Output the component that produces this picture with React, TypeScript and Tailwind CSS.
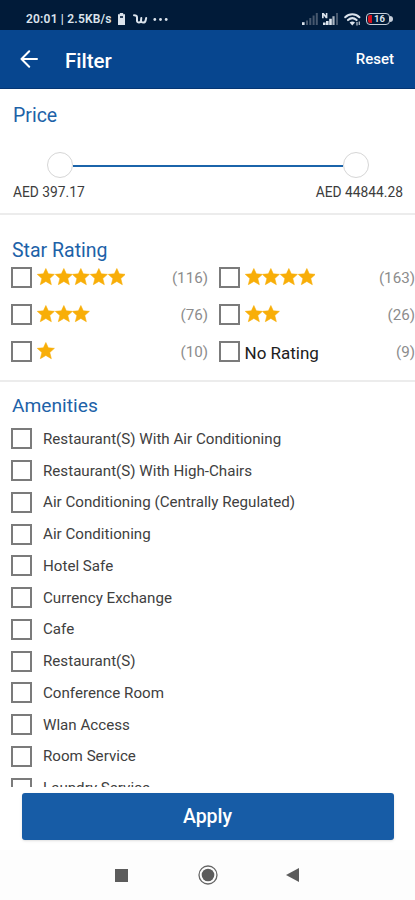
import React from 'react';

interface StarOption {
  stars: number;
  count: number;
}

interface CheckboxProps {
  label: string;
}

const starOptions: StarOption[] = [
  { stars: 5, count: 116 },
  { stars: 4, count: 163 },
  { stars: 3, count: 76 },
  { stars: 2, count: 26 },
  { stars: 1, count: 10 },
  { stars: 0, count: 9 },
];

const amenities = [
  'Restaurant(S) With Air Conditioning',
  'Restaurant(S) With High-Chairs',
  'Air Conditioning (Centrally Regulated)',
  'Air Conditioning',
  'Hotel Safe',
  'Currency Exchange',
  'Cafe',
  'Restaurant(S)',
  'Conference Room',
  'Wlan Access',
  'Room Service',
  'Laundry Service',
];

const Checkbox: React.FC<CheckboxProps> = ({ label }) => (
  <input
    type="checkbox"
    aria-label={label}
    className="block h-[21px] w-[21px] shrink-0 appearance-none border-2 border-[#7b7b7b] bg-white checked:bg-[#175ca6]"
  />
);

const Star: React.FC = () => (
  <svg className="h-[18px] w-[17.7px] shrink-0" viewBox="0 0 18 18" aria-hidden="true">
    <path
      fill="#f8ae08"
      stroke="#f8ae08"
      strokeWidth="0.6"
      strokeLinejoin="round"
      d="M9 .4l2.5 5.4 6.2.5-4.7 4.2 1.6 6.3L9 13.5l-5.6 3.3L5 10.5.3 6.3l6.2-.5z"
    />
  </svg>
);

const StatusBar: React.FC = () => (
  <div className="flex h-[30px] items-center bg-[#011b39] pl-[26px] pr-[22px] pt-2 text-[#dbe3ec]">
    <span className="w-[88px] whitespace-nowrap text-[12px] leading-4 font-semibold tracking-[0.2px]">
      20:01 | 2.5KB/s
    </span>
    <svg className="ml-[3px] h-[12px] w-[9px]" viewBox="0 0 9 12" aria-hidden="true">
      <path fill="currentColor" d="M2.8 0h3.4v1.3H8V12H1V1.3h1.8z" />
      <path fill="#011b39" d="M3 3.2h3v1.6H3z" />
    </svg>
    <svg className="ml-[7px] h-[10px] w-[15px]" viewBox="0 0 15 10" fill="none" aria-hidden="true">
      <path
        stroke="currentColor"
        strokeWidth="2"
        strokeLinecap="round"
        strokeLinejoin="round"
        d="M1 1.2c2 0 3 .6 3 2.3v3.2C4 9.2 7.8 9.2 8 6.5L8.3 4M8 6.5c.2 2.8 4 2.8 4.6 0L13.2 4"
      />
    </svg>
    <svg className="ml-[5px] h-[3px] w-[15px]" viewBox="0 0 15 3" fill="currentColor" aria-hidden="true">
      <circle cx="1.8" cy="1.5" r="1.4" />
      <circle cx="7.5" cy="1.5" r="1.4" />
      <circle cx="13.2" cy="1.5" r="1.4" />
    </svg>

    <div className="ml-auto flex items-center">
      <svg className="h-[12px] w-[16px]" viewBox="0 0 16 12" aria-hidden="true">
        <path fill="#dbe3ec" d="M0 9.2h2.6V12H0z" />
        <path fill="#47586e" d="M4 7.5h2V12H4zM7.3 5h2v7h-2zM10.6 2.5h2V12h-2zM13.8 0h2v12h-2z" />
      </svg>
      <svg className="ml-[4px] h-[12px] w-[17px]" viewBox="0 0 17 12" aria-hidden="true">
        <path fill="#dbe3ec" d="M0 0h1.8l2 2.6V0h1.6v5.2H3.8l-2.1-2.6v2.6H0zM1 9.5h2.6V12H1zM4 8h2.6v4H4zM7.2 5.8h2.6V12H7.2z" />
        <path fill="#aab5c2" d="M10.4 3.2h2.2V12h-2.2z" />
        <path fill="#47586e" d="M14 0h2v12h-2z" />
      </svg>
      <svg className="ml-[5px] h-[13px] w-[17px]" viewBox="0 0 17 13" fill="none" aria-hidden="true">
        <path
          stroke="currentColor"
          strokeWidth="2"
          strokeLinecap="round"
          d="M1.2 4.2c4-3.9 10.2-3.9 14.2 0M4 7.1c2.6-2.4 6-2.4 8.6 0"
        />
        <path fill="currentColor" d="M5.6 9.5c1.7-1.4 3.7-1.4 5.4 0l-2.7 3z" />
        <path stroke="#aab5c2" strokeWidth="1.4" d="M13 9v3.5M15.3 8.5V12" />
      </svg>
      <div className="ml-[5px] flex items-center">
        <div className="flex h-[12px] w-[24px] items-center rounded-[4px] border-[1.5px] border-[#c6cfda] p-px">
          <div className="h-full w-[4px] rounded-l-[2px] bg-[#d3101c]" />
          <span className="ml-[2px] text-[9.5px] leading-none font-bold">16</span>
        </div>
        <div className="h-[6px] w-[3px] rounded-r-[3px] bg-[#c6cfda]" />
      </div>
    </div>
  </div>
);

const Header: React.FC = () => (
  <header className="flex h-[59px] items-center border-b border-[#053673] bg-[#07468f] pl-[20px] pr-[21px] text-white">
    <button type="button" aria-label="Back">
      <svg className="h-[18px] w-[18px]" viewBox="0 0 18 18" fill="none" aria-hidden="true">
        <path
          stroke="currentColor"
          strokeWidth="2"
          strokeLinecap="round"
          strokeLinejoin="round"
          d="M17 9H1.8M9.2 1.2L1.5 9l7.7 7.8"
        />
      </svg>
    </button>
    <h1 className="ml-[27px] pt-[3px] text-[20.5px] leading-6 font-medium">Filter</h1>
    <button type="button" className="ml-auto pb-[1px] text-[15px] leading-5 font-medium">
      Reset
    </button>
  </header>
);

const PriceRange: React.FC = () => (
  <section className="h-[126px] border-b-2 border-[#ececec] pt-[15px]">
    <h2 className="pl-[13px] text-[19.5px] leading-6 text-[#1d62a8]">Price</h2>
    <div className="mt-[24px] flex items-center pl-[47px] pr-[46px]">
      <div className="h-[26px] w-[26px] rounded-full border border-[#d6d6d6] bg-white" />
      <div className="mt-[2px] h-[2px] flex-1 bg-[#1b64aa]" />
      <div className="h-[26px] w-[26px] rounded-full border border-[#d6d6d6] bg-white" />
    </div>
    <div className="mt-[4px] flex justify-between pl-[13px] pr-[12px] text-[13.8px] leading-5 text-[#3c3c3c]">
      <span>AED 397.17</span>
      <span>AED 44844.28</span>
    </div>
  </section>
);

const StarRating: React.FC = () => (
  <section className="h-[167px] border-b-2 border-[#ececec] pt-[24px]">
    <h2 className="pl-[12px] text-[19.5px] leading-6 text-[#1d62a8]">Star Rating</h2>
    <div className="mt-[4px] grid grid-cols-2 gap-y-[16px]">
      {starOptions.map(({ stars, count }) => (
        <div key={stars} className="flex h-[21px] items-center pl-[11px] odd:w-[208px]">
          <Checkbox label={stars ? `${stars} stars` : 'No Rating'} />
          <div className="ml-[5px] flex items-center">
            {stars > 0 ? (
              <div className="flex pb-[2px]">
                {Array.from({ length: stars }, (_, i) => (
                  <Star key={i} />
                ))}
              </div>
            ) : (
              <span className="pt-[4px] text-[17px] text-[#202020]">No Rating</span>
            )}
          </div>
          <span className="ml-auto pt-[2px] text-[15.2px] text-[#8c8c8c]">({count})</span>
        </div>
      ))}
    </div>
  </section>
);

const Amenities: React.FC = () => (
  <section className="h-[405px] overflow-hidden pt-[12px]">
    <h2 className="pl-[12px] text-[19.2px] leading-6 text-[#1d62a8]">Amenities</h2>
    <div className="mt-[5px]">
      {amenities.map((name) => (
        <label key={name} className="flex h-[31.75px] items-center pl-[11px]">
          <Checkbox label={name} />
          <span className="ml-[11px] text-[15.15px] leading-5 text-[#404040]">{name}</span>
        </label>
      ))}
    </div>
  </section>
);

const NavigationBar: React.FC = () => (
  <nav className="flex h-[50px] items-center bg-[#fdfdfd]">
    <svg className="ml-[115px] h-[13px] w-[13px]" viewBox="0 0 13 13" aria-hidden="true">
      <path fill="#5c5c5c" d="M0 0h13v13H0z" />
    </svg>
    <svg className="ml-[70px] h-[20px] w-[20px]" viewBox="0 0 20 20" aria-hidden="true">
      <circle cx="10" cy="10" r="9" fill="none" stroke="#666" strokeWidth="1.3" />
      <circle cx="10" cy="10" r="6.3" fill="#5c5c5c" />
    </svg>
    <svg className="ml-[68px] h-[14px] w-[13px]" viewBox="0 0 13 14" aria-hidden="true">
      <path fill="#5c5c5c" d="M13 0v14L0 7z" />
    </svg>
  </nav>
);

export default function App() {
  return (
    <div className="h-[900px] w-[415px] overflow-hidden bg-white font-[Roboto,sans-serif]">
      <StatusBar />
      <Header />
      <PriceRange />
      <StarRating />
      <Amenities />
      <div className="h-[63px] px-[21.5px] pt-[6px]">
        <button
          type="button"
          className="h-[47px] w-full rounded-[3px] bg-[#175ca6] text-[19.5px] font-medium text-white shadow-sm"
        >
          Apply
        </button>
      </div>
      <NavigationBar />
    </div>
  );
}
